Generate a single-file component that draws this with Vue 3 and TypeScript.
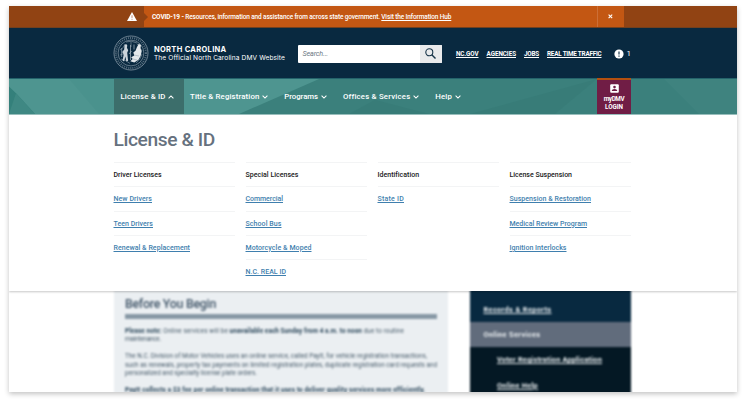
<script setup lang="ts">
interface NavItem { label: string; w: number }
interface MenuItem { label: string; w: number }
interface MenuColumn { title: MenuItem; items: MenuItem[] }

// Tracks a line of text so that it occupies the given measure in pixels.
const vFit = {
  mounted(el: HTMLElement, binding: { value: number }) {
    const n = (el.textContent ?? '').length
    if (n < 2) return
    el.style.letterSpacing = '0px'
    const natural = el.getBoundingClientRect().width
    el.style.letterSpacing = `${(binding.value - natural) / n}px`
  },
}

const nav: NavItem[] = [
  { label: 'License & ID', w: 45 },
  { label: 'Title & Registration', w: 69.5 },
  { label: 'Programs', w: 33.8 },
  { label: 'Offices & Services', w: 67 },
  { label: 'Help', w: 16.8 },
]

const topLinks: MenuItem[] = [
  { label: 'NC.GOV', w: 22.5 },
  { label: 'AGENCIES', w: 29.5 },
  { label: 'JOBS', w: 15 },
  { label: 'REAL TIME TRAFFIC', w: 54.5 },
]

const columns: MenuColumn[] = [
  {
    title: { label: 'Driver Licenses', w: 48 },
    items: [
      { label: 'New Drivers', w: 38.5 },
      { label: 'Teen Drivers', w: 39.5 },
      { label: 'Renewal & Replacement', w: 76.5 },
    ],
  },
  {
    title: { label: 'Special Licenses', w: 53 },
    items: [
      { label: 'Commercial', w: 37.5 },
      { label: 'School Bus', w: 36 },
      { label: 'Motorcycle & Moped', w: 66 },
      { label: 'N.C. REAL ID', w: 40.5 },
    ],
  },
  {
    title: { label: 'Identification', w: 41.5 },
    items: [{ label: 'State ID', w: 26.5 }],
  },
  {
    title: { label: 'License Suspension', w: 62.5 },
    items: [
      { label: 'Suspension & Restoration', w: 81.5 },
      { label: 'Medical Review Program', w: 77.5 },
      { label: 'Ignition Interlocks', w: 57 },
    ],
  },
]
</script>

<template>
  <div class="page">
    <main class="card">
      <div class="alert">
        <div class="alert-icon">
          <svg viewBox="0 0 10 9" width="10" height="9">
            <path d="M5 0 10 9H0z" fill="#fff" />
            <path d="M5 3.300v2.600M5 6.800v1" stroke="#b56b49" stroke-width=".8" />
          </svg>
        </div>
        <div class="alert-body">
          <span v-fit="229.3" class="line alert-text"><b>COVID-19 - </b>Resources, information and assistance from across state government.&nbsp;</span>
          <a v-fit="70" class="line alert-link">Visit the Information Hub</a>
          <div class="alert-close">
            <svg viewBox="0 0 5 5" width="5" height="5"><path d="M.6.6l3.600 3.600M4.200.6.6 4.200" stroke="#fff" stroke-width="1.100" /></svg>
          </div>
        </div>
        <div class="alert-end"></div>
      </div>

      <header class="header">
        <svg class="seal" viewBox="0 0 36 36" width="36" height="36" fill="none" stroke="#a5b4be">
          <circle cx="18" cy="18" r="17" stroke-width=".8" opacity=".8" />
          <circle cx="18" cy="18" r="15" stroke-width="2" stroke-dasharray="1 1.100" opacity=".5" />
          <circle cx="18" cy="18" r="12.900" stroke-width=".7" opacity=".8" />
          <path d="M7 20q3-2 5 0M7 15q4-2 5-6M8 24q5 1 9 4.500M23 28q5-4 6-9M13 7q5-2 11 1M18 7v5M26 11l3 5M24 9l3 2" stroke-width=".8" opacity=".65" />
          <path d="M11.500 10l1.700-1 1.100 1.400-.4 2.400 1.300 2.500-1 2.500.9 8-1.800.6-.9-5-1.300 5-1.600-.8 1.200-6-1.500-2.500 2-2.500z" fill="#cbd4da" stroke="none" />
          <path d="M24 12l1.800-3.200 2.200 1.400-.6 3 1.300 3-1 4.500-2.200 4-4.200 2.700-4-1.200 2.400-2.300-1.600-1.700 3.200-1.700-1-3 2.200-1.700z" fill="#e3e8eb" stroke="none" />
          <path d="M17.500 10v15M8.700 13v9M21 9.500v5M16 19l2.500-3M21 20l5 1M20 24l4 1" stroke-width=".9" opacity=".8" />
        </svg>
        <div class="brand">
          <strong v-fit="72.5" class="line brand-name">NORTH CAROLINA</strong>
          <span v-fit="131" class="line brand-sub">The Official North Carolina DMV Website</span>
        </div>
        <div class="search">
          <span v-fit="25.5" class="line search-hint">Search...</span>
          <div class="search-btn">
            <svg viewBox="0 0 11 11" width="11" height="11" fill="none" stroke="#173449">
              <circle cx="4.300" cy="4.300" r="3.500" stroke-width="1.100" /><path d="M6.800 6.800l3.700 3.700" stroke-width="1.400" />
            </svg>
          </div>
        </div>
        <nav class="top-links">
          <a v-for="l in topLinks" :key="l.label" v-fit="l.w" class="line">{{ l.label }}</a>
        </nav>
        <svg class="notice" viewBox="0 0 10 10" width="10" height="10">
          <circle cx="5" cy="5" r="4.600" fill="#fff" /><path d="M5 2.400v3.200M5 6.600v1.100" stroke="#092940" stroke-width="1.100" />
        </svg>
        <span class="notice-count">1</span>
      </header>

      <nav class="nav">
        <svg class="facets" viewBox="0 0 728 37" preserveAspectRatio="none">
          <path d="M0 0H310L230 37H0z" fill="#4e9590" />
          <path d="M0 8 7 15 26 37H0z" fill="#34807b" />
          <path d="M7 15 26 37H0z" fill="#3f8883" />
          <path d="M60 0h55v37H90z" fill="#468f8a" opacity=".45" />
          <path d="M588 0 546 37h-85z" fill="#337570" opacity=".3" />
          <path d="M366 22 340 37h80z" fill="#337570" opacity=".3" />
          <path d="M655 0 690 37H728V0z" fill="#458782" opacity=".45" />
        </svg>
        <div v-for="(n, i) in nav" :key="n.label" class="nav-item" :class="{ active: i === 0 }">
          <span v-fit="n.w" class="line">{{ n.label }}</span>
          <svg class="caret" viewBox="0 0 6 4" width="6" height="4" fill="none" stroke="#fff" stroke-width="1.050">
            <path :d="i === 0 ? 'M.6 3.300 3 .9l2.400 2.400' : 'M.6.7 3 3.100 5.400.7'" />
          </svg>
        </div>
        <div class="login">
          <svg viewBox="0 0 9 9" width="9" height="9">
            <rect x=".2" y=".2" width="8.600" height="8.600" rx="1" fill="#fff" />
            <circle cx="4.500" cy="3.100" r="1.300" fill="#701d45" /><path d="M1.900 6.900V6.100Q4.500 4.100 7.100 6.100v.8z" fill="#701d45" />
          </svg>
          <span v-fit="20.5" class="line">myDMV</span>
          <span v-fit="18" class="line">LOGIN</span>
        </div>
      </nav>

      <section class="mega">
        <h1 v-fit="101.5" class="line">License &amp; ID</h1>
        <div class="cols">
          <div v-for="c in columns" :key="c.title.label" class="col">
            <div class="row head"><span v-fit="c.title.w" class="line">{{ c.title.label }}</span></div>
            <div v-for="m in c.items" :key="m.label" class="row"><a v-fit="m.w" class="line">{{ m.label }}</a></div>
          </div>
        </div>
      </section>

      <div class="under">
        <div class="under-inner">
          <article class="article">
            <h2 v-fit="91" class="line">Before You Begin</h2>
            <div class="rule"></div>
            <p>
              <span v-fit="279" class="line"><b>Please note:</b> Online services will be <b>unavailable each Sunday from 4 a.m. to noon</b> due to routine</span>
              <span v-fit="36" class="line">maintenance.</span>
            </p>
            <p>
              <span v-fit="302" class="line">The N.C. Division of Motor Vehicles uses an online service, called PayIt, for vehicle registration transactions,</span>
              <span v-fit="312" class="line">such as renewals, property tax payments on limited registration plates, duplicate registration card requests and</span>
              <span v-fit="132" class="line">personalized and specialty license plate orders.</span>
            </p>
            <p><span v-fit="300" class="line"><b>PayIt collects a $3 fee per online transaction that it uses to deliver quality services more efficiently.</b></span></p>
          </article>
          <aside class="side">
            <div class="side-row first"><a v-fit="68" class="line">Records &amp; Reports</a></div>
            <div class="side-row current"><a v-fit="57" class="line">Online Services</a></div>
            <div class="side-row sub"><a v-fit="105" class="line">Voter Registration Application</a></div>
            <div class="side-row sub"><a v-fit="41" class="line">Online Help</a></div>
          </aside>
        </div>
      </div>
    </main>
  </div>
</template>

<style>
body { background: #fff; overflow: hidden; }
</style>

<style scoped>
* { box-sizing: border-box; }
.page { width: 746px; height: 404px; padding: 6px 9px 0; background: #fff; overflow: hidden; font-family: Roboto, "Liberation Sans", sans-serif; }
.card { width: 728px; height: 386px; background: #fff; box-shadow: 0 2px 5px rgba(0, 0, 0, .24); overflow: hidden; }
.line { display: block; width: max-content; white-space: pre; flex: none; }

.alert { display: flex; height: 22px; background: #914313; color: #fff; font-size: 6.500px; border-bottom: 1px solid #71401f; }
.alert-icon { width: 134.500px; padding: 6px 0 0 118px; flex: none; }
.alert-body { position: relative; flex: none; width: 480.500px; display: flex; align-items: center; padding-left: 8.500px; background: #c35713; }
.alert-body::before { content: ""; position: absolute; left: 0; top: 7px; border: 4px solid transparent; border-left-color: #914313; border-right: 0; }
.alert-text { font-weight: 500; }
.alert-text b { font-weight: 700; }
.alert-link { font-weight: 500; text-decoration: underline; text-underline-offset: 1px; text-decoration-thickness: 1px; }
.alert-close { margin-left: auto; width: 27.500px; height: 21px; display: flex; align-items: center; justify-content: center; border-left: 1px solid #cc6f37; }
.alert-end { flex: 1; }

.header { display: flex; align-items: center; height: 50px; padding-left: 104px; background: #092940; color: #fff; }
.seal { flex: none; }
.brand { width: 143px; margin-left: 5px; padding-top: 2px; display: flex; flex-direction: column; font-family: Inter, sans-serif; flex: none; }
.brand-name { font-size: 7.500px; line-height: 9px; font-weight: 700; }
.brand-sub { font-size: 6.600px; line-height: 9px; }
.search { width: 144px; height: 18px; margin-top: 1px; margin-left: .5px; background: #fff; display: flex; align-items: center; border-radius: 1px; overflow: hidden; flex: none; }
.search-hint { margin-left: 5px; color: #6e7a85; font-size: 7.200px; font-style: italic; }
.search-btn { margin-left: auto; width: 22px; height: 18px; background: #e9eaec; display: flex; align-items: center; justify-content: center; }
.top-links { display: flex; gap: 8px; margin-left: 14.500px; width: 158px; font-size: 6.300px; font-weight: 700; padding-top: 1px; }
.top-links a { text-decoration: underline; text-underline-offset: 1px; text-decoration-thickness: 1px; }
.notice { flex: none; margin-top: 1px; }
.notice-count { margin-left: 2.500px; font-size: 8px; }

.nav { position: relative; display: flex; height: 37px; padding-left: 104.500px; background: #3b807c; border-top: 1px solid #24636b; border-bottom: 1px solid #9bc2bf; color: #fff; font-size: 7.800px; }
.facets { position: absolute; inset: 0; width: 728px; height: 35px; }
.nav-item { position: relative; display: flex; align-items: center; margin-right: 16px; font-weight: 500; }
.nav-item.active { padding: 0 9px 0 7px; width: 70px; margin-right: 6.500px; background: #3c6e6b; }
.caret { margin-left: 2.800px; }
.login { position: absolute; left: 588px; top: -1px; width: 34px; height: 36px; border-top: 2px solid #b4500f; background: #701d45; display: flex; flex-direction: column; align-items: center; padding-top: 4px; font-size: 6.300px; font-weight: 700; line-height: 8.500px; }
.login svg { margin-bottom: 1.500px; flex: none; }

.mega { position: relative; height: 176px; padding: 10.500px 0 0 104.500px; background: #fff; box-shadow: 0 1px 2px rgba(0, 0, 0, .22); z-index: 1; }
h1 { margin: 0; height: 36.500px; line-height: 28px; font-size: 19.200px; font-weight: 500; color: #66717e; }
.cols { display: flex; gap: 10.500px; }
.col { width: 121.500px; }
.row { height: 24.250px; border-top: 1px solid #f3f4f5; display: flex; align-items: center; padding-top: 1px; font-size: 7px; font-weight: 500; }
.head { color: #191919; }
.row a { color: #3f7fae; text-decoration: underline; text-decoration-thickness: 1px; text-underline-offset: 1px; }

.under { height: 101px; overflow: hidden; }
.under-inner { display: flex; height: 130px; margin-top: -10px; padding: 0 0 0 105px; gap: 21.500px; filter: blur(1.250px); }
.article { width: 334px; padding: 15px 11px 0; background: #ebeff2; color: #465a69; font-size: 6.300px; line-height: 8.500px; }
h2 { margin: 0; font-size: 12.300px; line-height: 16px; font-weight: 500; color: #405568; }
.rule { height: 4.500px; width: 312px; background: #8798a5; margin: 2px 0 8px; }
.article p { margin: 0 0 8.500px; }
.article b { color: #294559; }
.side { width: 161.500px; background: #041824; color: #f0f4f6; }
.side-row { height: 25.300px; display: flex; align-items: center; padding-left: 14px; font-size: 7.300px; font-weight: 700; }
.side-row a { text-decoration: underline; text-decoration-thickness: 1px; }
.first { height: 41px; padding-top: 16px; background: #082940; }
.side-row.current { background: #616c7c; }
.side-row.current a { text-decoration: none; }
.side-row.sub { padding-left: 27.500px; padding-top: 0; }
</style>
